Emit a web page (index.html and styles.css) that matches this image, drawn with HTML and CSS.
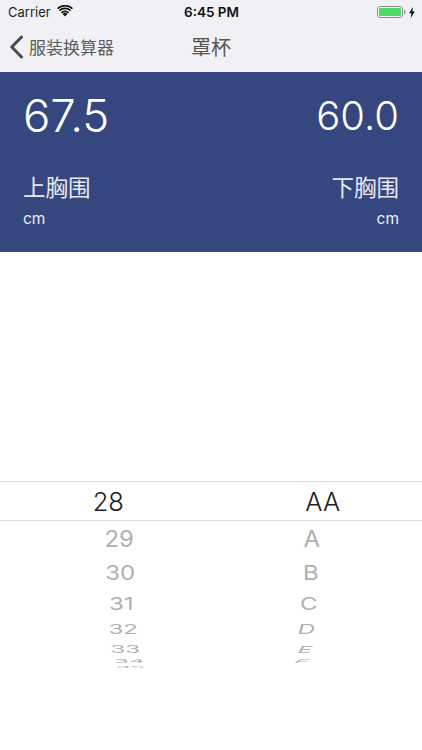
FILE: index.html
```html
<!DOCTYPE html>
<html lang="zh">
<head>
<meta charset="utf-8">
<title>罩杯</title>
<link rel="stylesheet" href="styles.css">
</head>
<body>
<div class="app">
  <header class="chrome">
    <div class="status">
      <div class="status-left">
        <span>Carrier</span>
        <svg class="wifi" viewBox="0 0 16 12" width="16" height="12"><path d="M8 11.6 5.6 9a3.4 3.4 0 0 1 4.8 0z" fill="#111"/><path d="M3.9 7.2a5.8 5.8 0 0 1 8.2 0l-1.1 1.2a4.2 4.2 0 0 0-6 0z" fill="#111"/><path d="M1.9 5.1a8.7 8.7 0 0 1 12.2 0L13 6.3a7.1 7.1 0 0 0-10 0z" fill="#111"/><path d="M0 3.1a11.4 11.4 0 0 1 16 0l-1.1 1.2a9.8 9.8 0 0 0-13.8 0z" fill="#111"/></svg>
      </div>
      <div class="status-time">6:45 PM</div>
      <div class="status-right">
        <svg class="battery" viewBox="0 0 29 12" width="29" height="12"><rect x=".5" y=".5" width="25" height="11" rx="2.6" fill="none" stroke="#8e8e8e"/><rect x="2" y="2" width="22" height="8" rx="1.3" fill="#4cd964"/><rect x="27" y="4" width="1.4" height="4" rx=".7" fill="#8e8e8e"/></svg>
        <svg class="bolt" viewBox="0 0 6 11" width="6" height="11"><path d="M3.8 0 .2 6.2h2.1L1.8 11l4-6.6H3.6z" fill="#111"/></svg>
      </div>
    </div>
    <nav class="nav">
      <div class="back">
        <svg class="chevron" viewBox="0 0 15 24" width="15" height="24"><path d="M12.5 2 2.8 12l9.7 10" fill="none" stroke="#4a4a4a" stroke-width="3" stroke-linecap="round" stroke-linejoin="round"/></svg>
        <span>服装换算器</span>
      </div>
      <h1 class="title">罩杯</h1>
    </nav>
  </header>

  <section class="summary">
    <div class="measure">
      <div class="value">67.5</div>
      <div class="label">上胸围</div>
      <div class="unit">cm</div>
    </div>
    <div class="measure measure-right">
      <div class="value value-small">60.0</div>
      <div class="label">下胸围</div>
      <div class="unit">cm</div>
    </div>
  </section>

  <section class="picker">
    <div class="selection"></div>
    <div class="wheel wheel-left">
      <div class="item selected"><span>28</span></div>
      <div class="item r1"><span>29</span></div>
      <div class="item r2"><span>30</span></div>
      <div class="item r3"><span>31</span></div>
      <div class="item r4"><span>32</span></div>
      <div class="item r5"><span>33</span></div>
      <div class="item r6"><span>34</span></div>
      <div class="item r7"><span>35</span></div>
    </div>
    <div class="wheel wheel-right">
      <div class="item selected"><span>AA</span></div>
      <div class="item r1"><span>A</span></div>
      <div class="item r2"><span>B</span></div>
      <div class="item r3"><span>C</span></div>
      <div class="item r4"><span>D</span></div>
      <div class="item r5"><span>E</span></div>
      <div class="item r6"><span>F</span></div>
    </div>
  </section>
</div>
</body>
</html>
```

FILE: styles.css
```css
* { box-sizing: border-box; }
html, body { margin: 0; padding: 0; }
body {
  width: 422px;
  height: 750px;
  overflow: hidden;
  background: #fff;
  font-family: Inter, "Noto Sans CJK SC", sans-serif;
}
.app { display: flex; flex-direction: column; height: 750px; }

.chrome { background: #f1f1f5; height: 72px; display: flex; flex-direction: column; }
.status {
  height: 24px;
  display: grid;
  grid-template-columns: 1fr auto 1fr;
  align-items: center;
  padding: 0 7px 0 8px;
  color: #222;
  font-size: 13px;
}
.status-left { display: flex; align-items: center; gap: 6px; }
.wifi { margin-top: -3px; }
.status-time { font-size: 13.5px; font-weight: 600; color: #111; }
.status-right { display: flex; justify-content: flex-end; align-items: center; gap: 3px; }

.nav { position: relative; height: 48px; display: flex; align-items: center; justify-content: center; }
.back {
  position: absolute;
  left: 9px;
  top: 11px;
  display: flex;
  align-items: center;
  gap: 5px;
  font: 17px "Noto Sans CJK SC", sans-serif;
  color: #5c5c5c;
  line-height: 24px;
}
.title {
  margin: -3px 0 0;
  font: 400 20px "Noto Sans CJK SC", sans-serif;
  color: #555;
  line-height: 48px;
}

.summary {
  background: #36467f;
  height: 180px;
  display: flex;
  justify-content: space-between;
  padding: 17px 23px 0;
  color: #fff;
}
.measure { display: flex; flex-direction: column; }
.measure-right { align-items: flex-end; }
.value { font-size: 45.5px; line-height: 54px; font-weight: 300; }
.value-small { font-size: 40px; }
.label {
  margin-top: 28px;
  font: 400 22.5px/30px "Noto Sans CJK SC", sans-serif;
  color: #e6e9f2;
}
.unit { margin-top: 9px; font-size: 15.5px; line-height: 18px; color: #eceef5; }

.picker { position: relative; margin-top: 229px; display: flex; height: 200px; }
.selection {
  position: absolute;
  left: 0;
  right: 0;
  top: 0;
  height: 40px;
  border-top: 1px solid #dcdcdc;
  border-bottom: 1px solid #dcdcdc;
}
.wheel { flex: 1; display: flex; flex-direction: column; align-items: center; color: #b0b0b0; }
.wheel-left { padding-left: 9px; }
.wheel-right { padding-left: 16px; }
.item { display: flex; align-items: center; justify-content: center; font-size: 24px; }
.item span { display: block; }
.selected { height: 40px; color: #222; font-size: 25.5px; font-weight: 300; }
.r1 { height: 35px; }
.r2 { height: 33px; }
.r3 { height: 28px; }
.r4 { height: 24px; }
.r5 { height: 16px; }
.r6 { height: 9px; }
.r7 { height: 3px; }

.wheel-left .r1 span { transform: translateX(11px) scaleY(.95); }
.wheel-left .r2 span { transform: translateX(12px) scaleY(.85); }
.wheel-left .r3 span { transform: translateX(13px) scaleY(.72); }
.wheel-left .r4 span { transform: translateX(15px) scaleY(.56); }
.wheel-left .r5 span { transform: translateX(17px) scaleY(.4); }
.wheel-left .r6 span { transform: translateX(21px) scaleY(.2); }
.wheel-left .r7 span { transform: translateX(22px) scaleY(.06); }

.wheel-right .r1 span { transform: translateX(-11px) scaleY(.95); }
.wheel-right .r2 span { transform: translateX(-12px) scaleY(.85); }
.wheel-right .r3 span { transform: translateX(-14px) scaleY(.72); }
.wheel-right .r4 span { transform: translateX(-16px) scaleY(.58) skewX(-8deg); }
.wheel-right .r5 span { transform: translateX(-18px) scaleY(.4) skewX(-12deg); }
.wheel-right .r6 span { transform: translateX(-21px) scaleY(.2) skewX(-16deg); }
```
